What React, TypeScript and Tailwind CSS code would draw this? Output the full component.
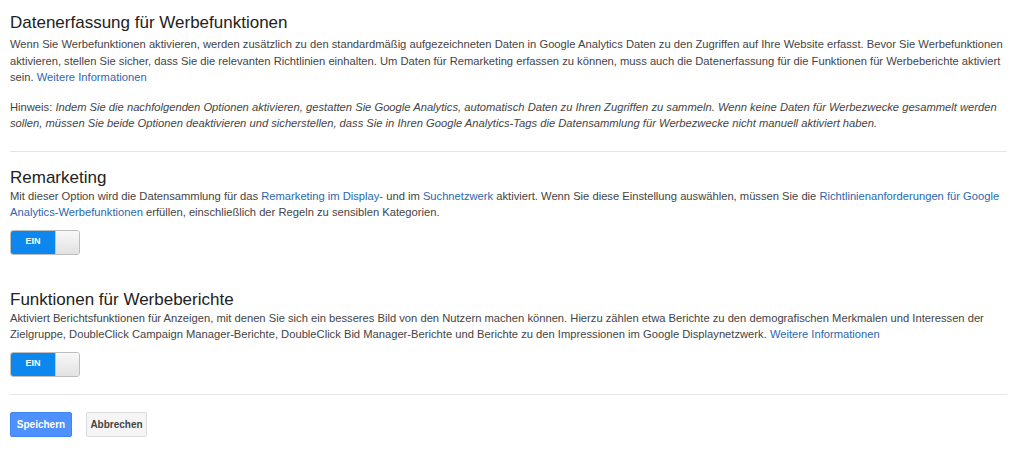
export default function App() {
  const link = 'text-[#2b67ae]';

  const Toggle = () => (
    <div className="mt-[9px] flex h-[25px] w-[70px] overflow-hidden rounded-[3px] border border-[#bdbdbd]">
      <div className="flex w-[44px] items-center justify-center bg-[#0c87ee] text-[9px] font-bold text-white">EIN</div>
      <div className="flex-1 border-l border-[#c6c6c6] bg-gradient-to-b from-[#f8f8f8] to-[#e2e2e2]" />
    </div>
  );

  return (
    <div className="min-h-[462px] bg-white font-['Liberation_Sans',Arial,sans-serif] text-[#444]">
      <div className="w-[1017px] px-[10px] pt-[13px]">
        {/* Datenerfassung */}
        <h2 className="text-[17px] leading-[20px] text-[#222]">Datenerfassung für Werbefunktionen</h2>
        <p className="mt-[3px] text-[11.2px] leading-[16.5px]">
          Wenn Sie Werbefunktionen aktivieren, werden zusätzlich zu den standardmäßig aufgezeichneten Daten in Google Analytics Daten zu den Zugriffen auf Ihre Website erfasst. Bevor Sie Werbefunktionen aktivieren, stellen Sie sicher, dass Sie die relevanten Richtlinien einhalten. Um Daten für Remarketing erfassen zu können, muss auch die Datenerfassung für die Funktionen für Werbeberichte aktiviert sein.{' '}
          <a className={link}>Weitere Informationen</a>
        </p>
        <p className="mt-[13px] text-[11.2px] leading-[16.5px]">
          Hinweis:{' '}
          <i>
            Indem Sie die nachfolgenden Optionen aktivieren, gestatten Sie Google Analytics, automatisch Daten zu Ihren Zugriffen zu sammeln. Wenn keine Daten für Werbezwecke gesammelt werden sollen, müssen Sie beide Optionen deaktivieren und sicherstellen, dass Sie in Ihren Google Analytics-Tags die Datensammlung für Werbezwecke nicht manuell aktiviert haben.
          </i>
        </p>
        <div className="mt-[19px] h-px bg-[#e5e5e5]" />

        {/* Remarketing */}
        <h2 className="mt-[16px] text-[17px] leading-[20px] text-[#222]">Remarketing</h2>
        <p className="text-[11.2px] leading-[16.5px]">
          Mit dieser Option wird die Datensammlung für das <a className={link}>Remarketing im Display-</a> und im{' '}
          <a className={link}>Suchnetzwerk</a> aktiviert. Wenn Sie diese Einstellung auswählen, müssen Sie die{' '}
          <a className={link}>Richtlinienanforderungen für Google Analytics-Werbefunktionen</a> erfüllen, einschließlich der Regeln zu sensiblen Kategorien.
        </p>
        <Toggle />

        {/* Werbeberichte */}
        <h2 className="mt-[35px] text-[17px] leading-[20px] text-[#222]">Funktionen für Werbeberichte</h2>
        <p className="text-[11.2px] leading-[16.5px]">
          Aktiviert Berichtsfunktionen für Anzeigen, mit denen Sie sich ein besseres Bild von den Nutzern machen können. Hierzu zählen etwa Berichte zu den demografischen Merkmalen und Interessen der Zielgruppe, DoubleClick Campaign Manager-Berichte, DoubleClick Bid Manager-Berichte und Berichte zu den Impressionen im Google Displaynetzwerk.{' '}
          <a className={link}>Weitere Informationen</a>
        </p>
        <Toggle />
        <div className="mt-[17px] h-px bg-[#e5e5e5]" />

        <div className="mt-[17px] flex gap-[14px]">
          <button className="h-[25px] w-[62px] rounded-[2px] border border-[#3f86f5] bg-[#4d90fe] text-[10px] font-bold text-white">
            Speichern
          </button>
          <button className="h-[25px] w-[61px] rounded-[2px] border border-[#dcdcdc] bg-[#f5f5f5] text-[10px] font-bold text-[#444]">
            Abbrechen
          </button>
        </div>
      </div>
    </div>
  );
}
